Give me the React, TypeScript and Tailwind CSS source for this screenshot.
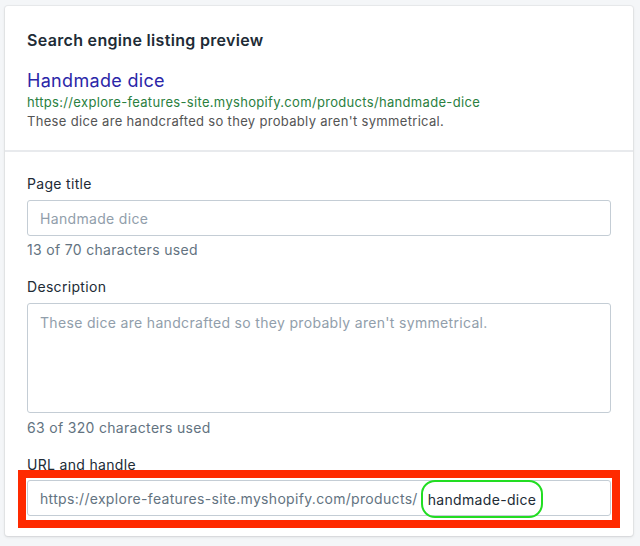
export default function App() {
  return (
    <div
      className="min-h-[546px] w-[640px] bg-[#f4f6f8] pl-[5px] pr-[7px] pt-[6px] tracking-[0.02em]"
      style={{ fontFamily: 'Inter, "Noto Sans", sans-serif' }}
    >
      <div className="rounded-[3px] bg-white shadow-[0_0_0_1px_rgba(63,63,68,0.05),0_1px_3px_0_rgba(63,63,68,0.15)]">
        {/* Preview */}
        <div className="px-[22px] pb-[20px] pt-[22px]">
          <h2 className="text-[16px] font-semibold leading-[24px] text-[#212b36]">
            Search engine listing preview
          </h2>
          <div className="mt-[18px]">
            <div className="text-[18px] leading-[22px] text-[#2b26a8]">Handmade dice</div>
            <div className="text-[13px] leading-[20px] text-[#2a8040]">
              https://explore-features-site.myshopify.com/products/handmade-dice
            </div>
            <div className="text-[13px] leading-[18px] text-[#545454]">
              These dice are handcrafted so they probably aren't symmetrical.
            </div>
          </div>
        </div>

        <div className="border-t-2 border-[#e8eaed] px-[22px] pb-[8px] pt-[22px]">
          {/* Page title */}
          <label className="block text-[14px] leading-[20px] text-[#212b36]">Page title</label>
          <div className="mt-[6px] flex h-[36px] items-center rounded-[3px] border border-[#c4cdd5] px-[12px] text-[14px] text-[#919eab]">
            Handmade dice
          </div>
          <div className="mt-[4px] text-[14px] leading-[20px] text-[#637381]">13 of 70 characters used</div>

          {/* Description */}
          <label className="mt-[17px] block text-[14px] leading-[20px] text-[#212b36]">Description</label>
          <div className="mt-[6px] h-[110px] rounded-[3px] border border-[#c4cdd5] px-[12px] pt-[9px] text-[14px] leading-[20px] text-[#919eab]">
            These dice are handcrafted so they probably aren't symmetrical.
          </div>
          <div className="mt-[5px] text-[14px] leading-[20px] text-[#637381]">63 of 320 characters used</div>

          {/* URL and handle */}
          <label className="relative z-0 mt-[17px] block text-[14px] leading-[20px] text-[#212b36]">URL and handle</label>
          <div className="relative z-10 -mx-[9px] mt-[-5px] border-[8px] border-[#ff2a00] pb-[4px] pl-[1px] pr-[1px] pt-[2px]">
            <div className="flex h-[36px] items-center rounded-[3px] border border-[#c4cdd5] bg-white px-[12px] text-[14px] text-[#637381]">
              <span>https://explore-features-site.myshopify.com/products/</span>
              <span className="ml-[3px] mt-[2px] flex h-[38px] items-center rounded-[14px] border-2 border-[#22dd22] px-[5px] text-[#212b36]">
                handmade-dice
              </span>
            </div>
          </div>
        </div>
      </div>
    </div>
  );
}
